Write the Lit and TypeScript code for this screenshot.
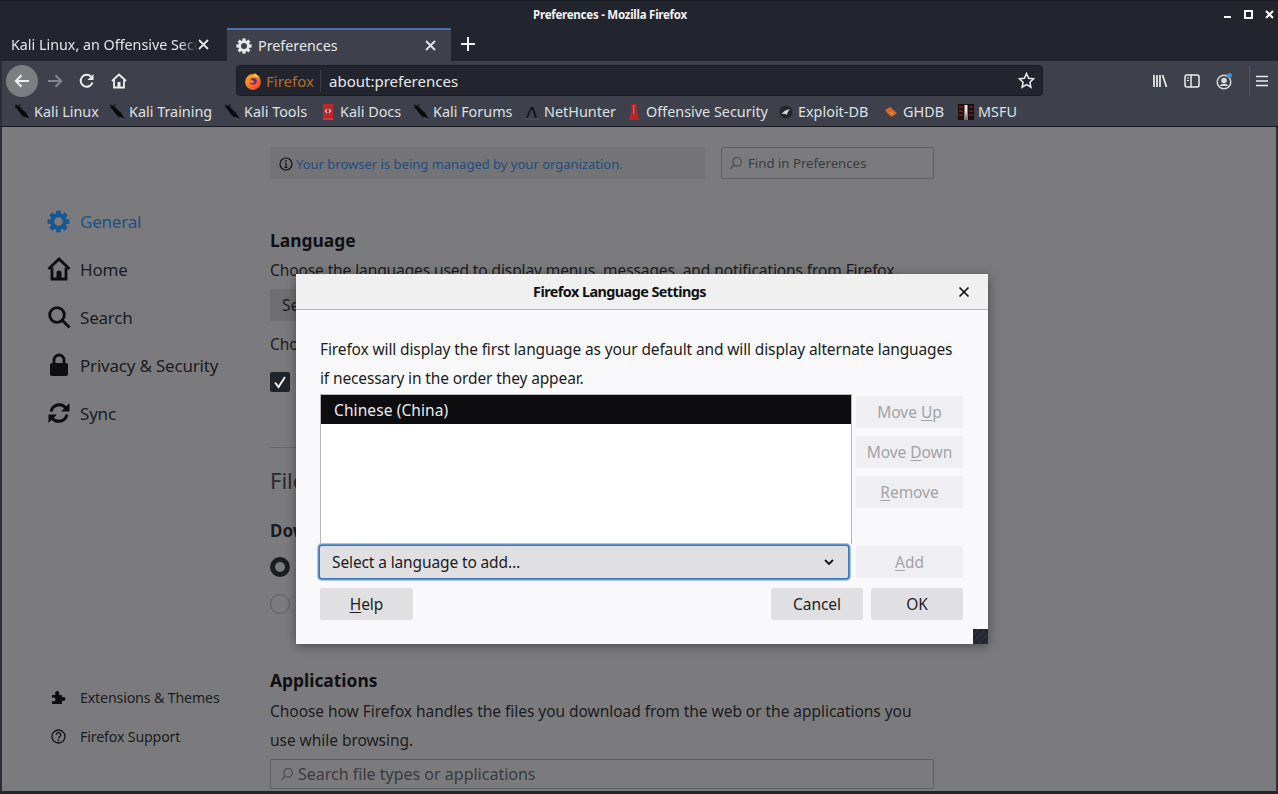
import { LitElement, html, css, svg } from "lit";
import { customElement } from "lit/decorators.js";

const gear = (size: number, color: string) => html`<svg width=${size} height=${size} viewBox="0 0 24 24">
  <circle cx="12" cy="12" r="6.6" fill="none" stroke=${color} stroke-width="4.2"/>
  ${[0, 45, 90, 135, 180, 225, 270, 315].map(a => svg`<rect x="9.6" y="0.6" width="4.8" height="5" fill=${color} transform="rotate(${a} 12 12)"/>`)}
</svg>`;

const kali = () => html`<svg width="16" height="16" viewBox="0 0 16 16">
  <path d="M0.5 0.5 C3 1 5 2 6.5 3.500 L10 7 C12 8.500 14 11 15.500 15.500 C12.500 14.500 10 13.500 7.500 11 L4.500 7 C3.500 5 2 3 0.5 0.5Z" fill="#0b0b0d"/>
  <path d="M1 3.500 L3.500 4 M4.500 1.200 L7 1" stroke="#0b0b0d" stroke-width="1"/>
  <path d="M11 13.500 L15 15.500" stroke="#8f9095" stroke-width=".6"/>
</svg>`;

const docs = () => html`<svg width="16" height="16" viewBox="0 0 16 16">
  <rect x="3" y="0" width="10" height="13.5" fill="#c0272d"/><rect x="3" y="14" width="10" height="2" fill="#d8343a"/>
  <path d="M7 5 L5.4 7 L7 9 M9 5 L10.6 7 L9 9" fill="none" stroke="#fff" stroke-width="1.1"/>
</svg>`;
const hunter = () => html`<svg width="16" height="16" viewBox="0 0 16 16">
  <path d="M2 14 L6 4 Q8 1 10 4 L13 14 L11 14 L8.5 6 L7 6 L4 14Z" fill="#16171b"/><path d="M1 15h14" stroke="#55585f"/>
</svg>`;
const offsec = () => html`<svg width="16" height="16" viewBox="0 0 16 16">
  <path d="M5.500 0h5v7l3 9h-11l3-9Z" fill="#b3262b"/><path d="M7 1h1.400v9H7z" fill="#e2575a"/>
</svg>`;
const exploit = () => html`<svg width="16" height="16" viewBox="0 0 16 16">
  <circle cx="8" cy="8" r="6.5" fill="#23252b"/><path d="M3.5 10 Q7 5 12.5 5.5 Q9 7.5 9 11 Q7 9 3.5 10Z" fill="#d4d5d8"/>
</svg>`;
const ghdb = () => html`<svg width="16" height="16" viewBox="0 0 16 16">
  <path d="M2 6 L7 3 L14 9 L9 13 L5 10Z" fill="#d9662a"/><path d="M7 8l3 2" stroke="#f2a160"/>
</svg>`;
const msfu = () => html`<svg width="16" height="16" viewBox="0 0 16 16">
  <rect x="0" y="0" width="16" height="16" fill="#1a1012"/>
  <path d="M1 3h4M1 7h4M1 11h4M11 3h4M11 7h4M11 11h4" stroke="#7a2024" stroke-width="1.6"/>
  <path d="M6.5 1h3v15H8.6L8 7 7.4 16H6.5Z" fill="#e9e4e4"/>
</svg>`;

const firefox = () => html`<svg width="18" height="18" viewBox="0 0 18 18">
  <defs><linearGradient id="ff" x1="0" y1="0" x2="1" y2="1"><stop offset="0" stop-color="#ffb325"/><stop offset="1" stop-color="#ea3b2c"/></linearGradient></defs>
  <circle cx="9" cy="10" r="7.9" fill="url(#ff)"/>
  <path d="M6.500 7.500 C8 5.500 11 5.500 12.500 7.500 C13.500 10 12 12.500 9 12.500 C7.500 12.500 6 12 5.500 10.500 C7.500 11.500 10 11.500 10.400 9.800 C9.500 8.500 8 8.500 6.500 7.500Z" fill="#6b2a7a"/>
  <path d="M4 2 C5 4 6 5 8 5 C10 3 10.500 2 10.500 1 C13 2.500 15 4 16 7 C14 5 12 4.500 9 5 C7 5.200 5 5 4 2Z" fill="#ffcb2e"/>
</svg>`;

const lens = (c: string) => html`<svg width="14" height="14" viewBox="0 0 14 14">
  <circle cx="8.200" cy="5.800" r="4.300" fill="none" stroke=${c} stroke-width="1.200"/><path d="M5 9 L1.500 12.800" stroke=${c} stroke-width="1.300"/>
</svg>`;

const BOOKMARKS: [string, () => unknown, number][] = [
  ["Kali Linux", kali, 95],
  ["Kali Training", kali, 115],
  ["Kali Tools", kali, 96],
  ["Kali Docs", docs, 93],
  ["Kali Forums", kali, 111],
  ["NetHunter", hunter, 102],
  ["Offensive Security", offsec, 152],
  ["Exploit-DB", exploit, 105],
  ["GHDB", ghdb, 75],
  ["MSFU", msfu, 60],
];

@customElement("app-root")
export class AppRoot extends LitElement {
  static styles = css`
    :host { display: block; width: 1278px; height: 794px; overflow: hidden; background: #22252e;
      font-family: "Noto Sans", "Open Sans", sans-serif; color: #1b1b20; }
    * { box-sizing: border-box; }
    svg { display: block; flex: none; }
    u { text-underline-offset: 2px; }

    .titlebar { height: 28px; display: flex; align-items: center; background: #23252e; border-top: 1px solid #191b22; padding-bottom: 1px; color: #f2f2f2; }
    .title { flex: 1; text-align: center; font-size: 11.5px; font-weight: 700; letter-spacing: -0.25px; }
    .winctl { width: 58px; display: flex; align-items: center; gap: 12px; padding-left: 4px; }

    .tabs { height: 33px; display: flex; background: #23252e; color: #e4e5e8; font-size: 14.3px; }
    .tab { height: 33px; display: flex; align-items: center; position: relative; }
    .tab1 { width: 227px; padding-left: 11px; padding-right: 11px; }
    .tab1 .t { width: 187px; overflow: hidden; white-space: nowrap;
      -webkit-mask-image: linear-gradient(to right, #000 170px, transparent 187px); mask-image: linear-gradient(to right, #000 170px, transparent 187px); }
    .tab2 { width: 224px; padding-left: 9px; padding-right: 15px; background: #3e414c; border-top: 2px solid #4a6ea5; gap: 6px; }
    .tab2 .t { flex: 1; }
    .plus { width: 34px; display: flex; align-items: center; justify-content: center; padding-bottom: 2px; }

    .toolbar { height: 36px; display: flex; align-items: flex-start; padding-top: 4px; background: #3e414c; border-left: 2px solid #2c2e37; color: #eee; }
    .back { width: 32px; height: 32px; border-radius: 50%; background: #7d7e82; display: flex; align-items: center; justify-content: center; margin-left: 4px; }
    .tb { width: 32px; height: 32px; display: flex; align-items: center; justify-content: center; }
    .fwd { margin-left: 1px; }
    .url { margin-left: 101px; width: 807px; height: 31px; background: #23252e; border: 1px solid #1a1b22; border-radius: 4px; display: flex; align-items: center; font-size: 15px; color: #e8e8ea; }
    .identity { display: flex; align-items: center; gap: 4px; width: 84px; height: 22px; padding-left: 7px; border-right: 1px solid #3b3d47; color: #b06f2d; }
    .addr { flex: 1; padding-left: 8px; }
    .star { margin-right: 7px; }
    .rt { margin-left: 101px; display: flex; align-items: center; }
    .vsep { width: 1px; height: 30px; background: #565963; margin: 0 4px 0 9px; }
    .tb.menu { width: 16px; }

    .bookmarks { height: 30px; display: flex; align-items: center; background: #3e414c; border-left: 2px solid #2c2e37; border-bottom: 1px solid #191b22; padding-left: 12px; color: #dfe0e3; font-size: 14.4px; }
    .bm { display: flex; align-items: center; gap: 4px; white-space: nowrap; }

    .content { position: relative; height: 667px; background: #7b7b7d; border-left: 2px solid #2c2e37; border-right: 2px solid #2c2e37; border-bottom: 3px solid #22252e; display: flex; overflow: hidden; }
    .side { width: 268px; flex: none; display: flex; flex-direction: column; padding: 70px 0 35px 45px; }
    .nav { height: 48px; display: flex; align-items: center; gap: 10px; font-size: 17px; letter-spacing: -0.2px; white-space: nowrap; }
    .nav .ic { width: 23px; display: flex; justify-content: center; }
    .nav.on { color: #1d4f88; }
    .spacer { flex: 1; }
    .sub { height: 39px; display: flex; align-items: center; gap: 15px; padding-left: 5px; font-size: 14.2px; letter-spacing: -0.15px; white-space: nowrap; }
    .sub .ic { width: 13px; display: flex; justify-content: center; }

    .main { width: 664px; flex: none; padding-top: 20px; font-size: 15.5px; letter-spacing: -0.04px; }
    .top { display: flex; gap: 16px; height: 32px; }
    .banner { width: 435px; background: #747476; display: flex; align-items: center; gap: 3px; padding-left: 9px; padding-top: 1px; color: #1f4d7e; font-size: 13px; letter-spacing: 0; white-space: nowrap; }
    .find { width: 213px; border: 1px solid #5e5e62; border-radius: 2px; display: flex; align-items: center; gap: 5px; padding-left: 7px; color: #3a3a3f; font-size: 13.2px; letter-spacing: 0; }
    h2 { margin: 0; font-size: 17.4px; font-weight: 700; line-height: 24px; color: #101014; letter-spacing: 0; }
    .lang { margin-top: 49px; }
    p { margin: 0; line-height: 29px; white-space: nowrap; }
    .choose { margin-top: 4px; letter-spacing: -0.1px; }
    .fakebtn { margin-top: 4px; width: 120px; height: 32px; background: #6f6f71; padding-left: 12px; line-height: 32px; white-space: nowrap; overflow: hidden; }
    .cho { margin-top: 9px; }
    .check { margin-top: 13px; width: 20px; height: 20px; border-radius: 2px; background: #21232b; display: flex; align-items: center; justify-content: center; }
    .hr { margin-top: 55px; height: 1px; background: #68686b; }
    .files { margin-top: 18px; font-size: 22px; line-height: 28px; color: #2a2a2f; font-weight: 400; }
    .dow { margin-top: 25px; font-weight: 700; font-size: 17px; line-height: 24px; }
    .radio { width: 20px; height: 20px; border-radius: 50%; }
    .r1 { margin-top: 14px; border: 5px solid #1c1d22; background: #7b7b7d; }
    .r2 { margin-top: 17px; border: 1px solid #5c5c60; }
    .apps { margin-top: 54px; }
    .apps2 { margin-top: 5px; }
    .bigsearch { margin-top: 4px; height: 30px; border: 1px solid #5e5e62; border-radius: 2px; display: flex; align-items: center; gap: 4px; padding-left: 9px; padding-bottom: 1px; color: #3a3a3f; font-size: 16px; letter-spacing: 0; }

    .dialog { position: absolute; left: 294px; top: 147px; width: 692px; height: 370px; background: #f9f9fb; box-shadow: 0 2px 10px rgba(0,0,0,.4); display: flex; flex-direction: column; font-size: 15.5px; letter-spacing: -0.125px; }
    .dhead { height: 36px; flex: none; position: relative; background: #f0f0f1; border-bottom: 1px solid #b5b5b8; display: flex; align-items: center; justify-content: center; padding-right: 45px; padding-bottom: 1px; font-weight: 700; font-size: 14.4px; letter-spacing: -0.56px; color: #111; }
    .x { position: absolute; right: 18px; top: 12px; }
    .dbody { flex: 1; padding: 25px 25px 0 24px; display: flex; flex-direction: column; }
    .dbody p { color: #1d1d22; }
    .grid { margin-top: 1px; display: grid; grid-template-columns: 532px 107px; column-gap: 4px; }
    .list { height: 150px; background: #fff; border-left: 1px solid #b5b5b8; border-right: 1px solid #b5b5b8; border-top: 1px solid #b5b5b8; }
    .sel { height: 29px; background: #0d0d10; color: #ececee; padding-left: 13px; line-height: 31px; letter-spacing: 0.1px; }
    .btns { display: flex; flex-direction: column; gap: 8px; padding-top: 2px; }
    .btn { height: 32px; background: #e0e0e2; border-radius: 2px; display: flex; align-items: center; justify-content: center; color: #1d1d22; white-space: nowrap; letter-spacing: -0.05px; }
    .btn.dis { background: #efeff1; color: #a2a2a6; }
    .row2 { margin-top: 2px; display: grid; grid-template-columns: 528px 107px; column-gap: 8px; }
    .select { height: 32px; background: #e0e0e2; border-radius: 2px; box-shadow: 0 0 0 1px #3f78b5, 0 0 0 2px #5f92cc, 0 0 0 3px #a9c8e8; display: flex; align-items: center; justify-content: space-between; padding: 0 14px 0 12px; position: relative; }
    .row3 { margin-top: 10px; display: flex; gap: 8px; }
    .row3 .grow { flex: 1; }
    .help { width: 93px; }
    .cancel, .ok { width: 92px; }
    .grip { position: absolute; right: 0; bottom: 0; width: 15px; height: 15px; background: repeating-linear-gradient(135deg, #22252e 0 3px, #2b2e38 3px 5px); }
  `;

  render() {
    return html`
      <div class="titlebar">
        <div class="title">Preferences - Mozilla Firefox</div>
        <div class="winctl">
          <svg width="8" height="8" viewBox="0 0 8 8"><path d="M0 7h7" stroke="#fff" stroke-width="2"/></svg>
          <svg width="9" height="9" viewBox="0 0 9 9"><rect x="1" y="1" width="7" height="7" fill="none" stroke="#fff" stroke-width="2"/></svg>
          <svg width="9" height="9" viewBox="0 0 9 9"><path d="M1 1l7 7M8 1L1 8" stroke="#fff" stroke-width="2"/></svg>
        </div>
      </div>

      <div class="tabs">
        <div class="tab tab1">
          <div class="t">Kali Linux, an Offensive Security</div>
          <svg width="11" height="11" viewBox="0 0 11 11"><path d="M1 1l9 9M10 1L1 10" stroke="#e4e5e8" stroke-width="1.800"/></svg>
        </div>
        <div class="tab tab2">
          ${gear(16, "#e8e8ea")}
          <div class="t">Preferences</div>
          <svg width="11" height="11" viewBox="0 0 11 11"><path d="M1 1l9 9M10 1L1 10" stroke="#e4e5e8" stroke-width="1.800"/></svg>
        </div>
        <div class="plus"><svg width="14" height="14" viewBox="0 0 14 14"><path d="M7 0v14M0 7h14" stroke="#eee" stroke-width="2"/></svg></div>
      </div>

      <div class="toolbar">
        <div class="back"><svg width="16" height="14" viewBox="0 0 16 14"><path d="M15 7H2M7.500 1.200 1.800 7l5.700 5.800" fill="none" stroke="#eee" stroke-width="2"/></svg></div>
        <div class="tb fwd"><svg width="16" height="14" viewBox="0 0 16 14"><path d="M1 7h13M8.500 1.200 14.200 7l-5.700 5.800" fill="none" stroke="#85878e" stroke-width="2"/></svg></div>
        <div class="tb"><svg width="16" height="16" viewBox="0 0 16 16"><path d="M13.500 9.500A6 6 0 1 1 12 3.500" fill="none" stroke="#eee" stroke-width="2"/><path d="M14.500 1v6h-6Z" fill="#eee"/></svg></div>
        <div class="tb"><svg width="16" height="16" viewBox="0 0 16 16"><path d="M1 8 8 1.500 15 8M3 7v7.500h10V7" fill="none" stroke="#eee" stroke-width="1.800"/><rect x="6.500" y="9" width="3" height="5.500" fill="#eee"/></svg></div>
        <div class="url">
          <div class="identity">${firefox()}<span>Firefox</span></div>
          <div class="addr">about:preferences</div>
          <svg class="star" width="17" height="17" viewBox="0 0 17 17"><path d="M8.500 1.500l2.100 4.700 5 .6-3.700 3.400 1 5-4.400-2.500-4.400 2.500 1-5L1.400 6.800l5-.6Z" fill="none" stroke="#eee" stroke-width="1.500"/></svg>
        </div>
        <div class="rt">
          <div class="tb"><svg width="16" height="16" viewBox="0 0 16 16"><path d="M2 2v12M5 2v12M8 2v12M10.500 2l4 12" stroke="#eee" stroke-width="1.700"/></svg></div>
          <div class="tb"><svg width="16" height="16" viewBox="0 0 16 16"><rect x="1" y="2" width="14" height="12" rx="2" fill="none" stroke="#eee" stroke-width="1.500"/><path d="M7 2v12" stroke="#eee" stroke-width="1.500"/><path d="M3 5h2M3 7.500h2" stroke="#eee"/></svg></div>
          <div class="tb"><svg width="18" height="18" viewBox="0 0 18 18"><circle cx="9" cy="10" r="6.800" fill="none" stroke="#d8d8da" stroke-width="1.500"/><circle cx="9" cy="8.500" r="2.800" fill="#d8d8da"/><path d="M4.500 14a5 4 0 0 1 9 0Z" fill="#d8d8da"/><circle cx="14.500" cy="3.500" r="2.500" fill="#3f8fe0"/></svg></div>
          <div class="vsep"></div>
          <div class="tb menu"><svg width="14" height="12" viewBox="0 0 14 12"><path d="M1 1.500h12M1 6h12M1 10.500h12" stroke="#eee" stroke-width="1.600"/></svg></div>
        </div>
      </div>

      <div class="bookmarks">
        ${BOOKMARKS.map(([label, icon, w]) => html`<div class="bm" style="width:${w}px">${icon()}<span>${label}</span></div>`)}
      </div>

      <div class="content">
        <div class="side">
          <div class="nav on"><div class="ic">${gear(23, "#17568f")}</div>General</div>
          <div class="nav"><div class="ic"><svg width="24" height="24" viewBox="0 0 24 24"><path d="M1.500 12 12 2l10.500 10" fill="none" stroke="#0e0e11" stroke-width="2.800"/><path d="M5 10.500V22h14V10.500" fill="none" stroke="#0e0e11" stroke-width="2.800"/><path d="M9.500 22v-6a2.500 2.500 0 0 1 5 0v6Z" fill="#0e0e11"/></svg></div>Home</div>
          <div class="nav"><div class="ic"><svg width="24" height="24" viewBox="0 0 24 24"><circle cx="10" cy="10" r="7.300" fill="none" stroke="#0e0e11" stroke-width="2.800"/><path d="M15.500 15.500 22.500 22.500" stroke="#0e0e11" stroke-width="3"/></svg></div>Search</div>
          <div class="nav"><div class="ic"><svg width="20" height="24" viewBox="0 0 20 24"><path d="M5 11V7a5 5 0 0 1 10 0v4" fill="none" stroke="#0e0e11" stroke-width="2.800"/><rect x="1" y="10" width="18" height="13" rx="2" fill="#0e0e11"/></svg></div>Privacy &amp; Security</div>
          <div class="nav"><div class="ic"><svg width="22" height="24" viewBox="0 0 22 24"><path d="M3 10.500A8.500 8.500 0 0 1 18 7" fill="none" stroke="#0e0e11" stroke-width="3"/><path d="M21.500 2v8.500H13Z" fill="#0e0e11"/><path d="M19 13.500A8.500 8.500 0 0 1 4 17" fill="none" stroke="#0e0e11" stroke-width="3"/><path d="M0.500 22v-8.500H9Z" fill="#0e0e11"/></svg></div>Sync</div>
          <div class="spacer"></div>
          <div class="sub"><div class="ic"><svg width="15" height="15" viewBox="0 0 15 15"><path d="M1 5h3.500C3.500 2.500 5 1 6.200 1S9 2.500 8 5h3v2.500c2-1 3.500 0 3.500 1.500S13 11.500 11 10.500V14H1v-3c2 1 3.500-.2 3.500-1.600S3 6.800 1 8Z" fill="#0e0e11"/></svg></div>Extensions &amp; Themes</div>
          <div class="sub"><div class="ic"><svg width="15" height="15" viewBox="0 0 15 15"><circle cx="7.500" cy="7.500" r="6.500" fill="none" stroke="#0e0e11" stroke-width="1.300"/><path d="M5.300 5.800a2.200 2.200 0 1 1 3.300 1.900C7.800 8.200 7.500 8.600 7.500 9.500" fill="none" stroke="#0e0e11" stroke-width="1.300"/><circle cx="7.500" cy="11.300" r=".9" fill="#0e0e11"/></svg></div>Firefox Support</div>
        </div>

        <div class="main">
          <div class="top">
            <div class="banner">
              <svg width="14" height="14" viewBox="0 0 14 14"><circle cx="7" cy="7" r="6" fill="none" stroke="#111" stroke-width="1.200"/><path d="M7 6v4.500M5.500 10.500h3M5.800 6H7" stroke="#111" stroke-width="1.200"/><circle cx="7" cy="3.800" r=".9" fill="#111"/></svg>
              <span>Your browser is being managed by your organization.</span>
            </div>
            <div class="find">${lens("#4a4a4f")}<span>Find in Preferences</span></div>
          </div>
          <h2 class="lang">Language</h2>
          <p class="choose">Choose the languages used to display menus, messages, and notifications from Firefox.</p>
          <div class="fakebtn">Se</div>
          <p class="cho">Cho</p>
          <div class="check"><svg width="14" height="14" viewBox="0 0 14 14"><path d="M2 7.500 5.500 12 12 2" fill="none" stroke="#eee" stroke-width="2"/></svg></div>
          <div class="hr"></div>
          <div class="files">File</div>
          <div class="dow">Dow</div>
          <div class="radio r1"></div>
          <div class="radio r2"></div>
          <h2 class="apps">Applications</h2>
          <p class="apps2">Choose how Firefox handles the files you download from the web or the applications you</p>
          <p>use while browsing.</p>
          <div class="bigsearch">${lens("#4a4a4f")}<span>Search file types or applications</span></div>
        </div>

        <div class="dialog">
          <div class="dhead">Firefox Language Settings
            <svg class="x" width="12" height="12" viewBox="0 0 12 12"><path d="M1.500 1.500l9 9M10.500 1.500l-9 9" stroke="#111" stroke-width="1.700"/></svg>
          </div>
          <div class="dbody">
            <p>Firefox will display the first language as your default and will display alternate languages</p>
            <p>if necessary in the order they appear.</p>
            <div class="grid">
              <div class="list"><div class="sel">Chinese (China)</div></div>
              <div class="btns">
                <div class="btn dis">Move&nbsp;<u>U</u>p</div>
                <div class="btn dis">Move&nbsp;<u>D</u>own</div>
                <div class="btn dis"><u>R</u>emove</div>
              </div>
            </div>
            <div class="row2">
              <div class="select"><span>Select a language to add…</span>
                <svg width="10" height="7" viewBox="0 0 10 7"><path d="M1 1l4 4 4-4" fill="none" stroke="#111" stroke-width="1.800"/></svg>
              </div>
              <div class="btn dis"><u>A</u>dd</div>
            </div>
            <div class="row3">
              <div class="btn help"><u>H</u>elp</div>
              <div class="grow"></div>
              <div class="btn cancel">Cancel</div>
              <div class="btn ok">OK</div>
            </div>
          </div>
          <div class="grip"></div>
        </div>
      </div>
    `;
  }
}
